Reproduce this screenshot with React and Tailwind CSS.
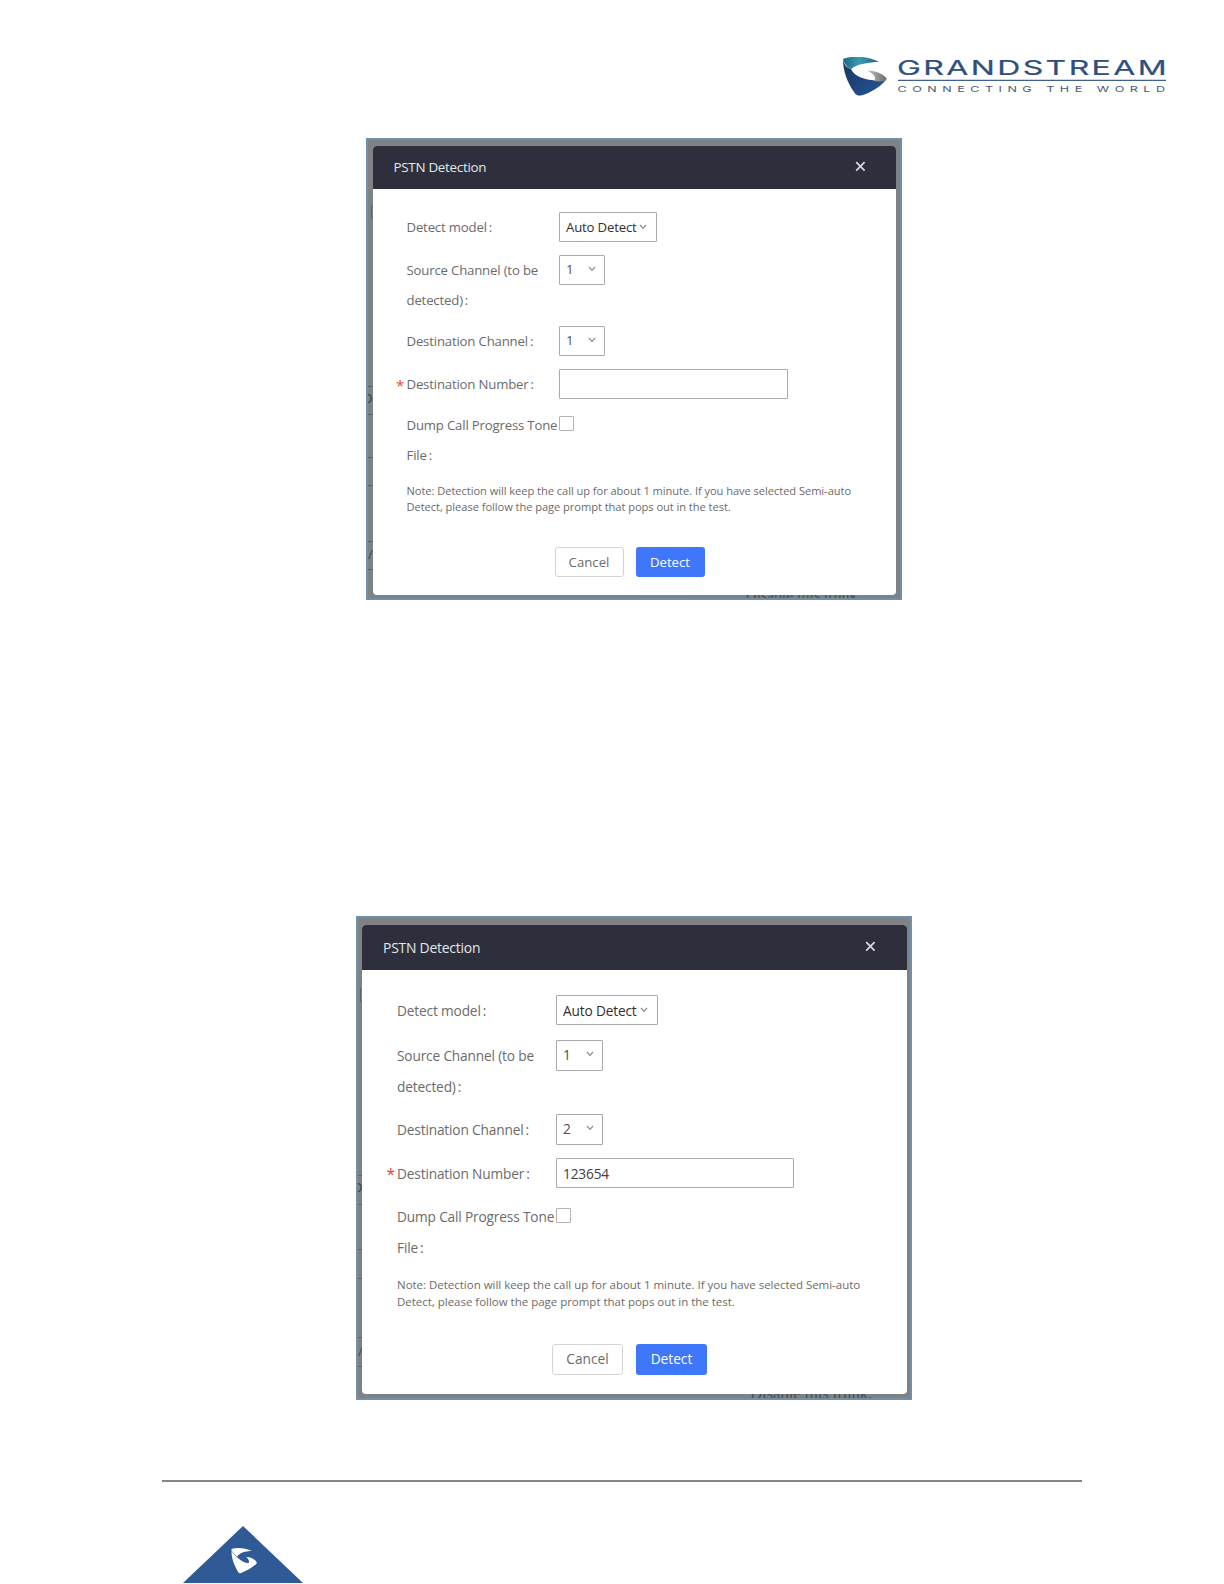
import React from "react";

const first = {
  frame: "ml-[366px] w-[536px] h-[462px] pt-[8px] pl-[7px]",
  modal: "w-[523px] h-[449px]",
  header: "h-[43px] pl-[20.5px] pr-[30px] text-[13.4px] tracking-[-0.28px]",
  title: "",
  close: "size-[11px] mb-[2px]",
  form: "pt-[23px] pl-[33.5px] text-[13.2px] leading-[30px] tracking-[-0.18px]",
  star: "-left-[10.5px] text-[15px]",
  label: "w-[152px]",
  row: "h-[43px]",
  tallRow: "h-[71px]",
  dumpRow: "h-[58px] -mt-[2px]",
  select: "w-[98px] h-[30px] pl-[6.5px] pr-[9px]",
  small: "w-[46px] h-[30px] pl-[6.5px] pr-[8px] pb-[2px]",
  input: "w-[229px] h-[30px] pl-[7px]",
  check: "size-[15px] mt-[6px]",
  note: "mt-[15px] text-[11.1px] leading-[16px] tracking-[-0.045px]",
  actions: "mt-[32px] ml-[148px] gap-[12px] text-[13.2px] tracking-normal",
  button: "w-[69px] h-[30px] pb-px",
  hidden: "left-[377px] top-[448px] text-[15.8px]",
  marks: [
    "top-[65px] h-[14px] w-px left-[3px]",
    "top-[246px] h-px w-[5px] left-0",
    "top-[274px] h-px w-[5px] left-0",
    "top-[317px] h-px w-[5px] left-0",
    "top-[345px] h-px w-[5px] left-0",
    "top-[401px] h-px w-[5px] left-0",
    "top-[429px] h-px w-[5px] left-0",
  ],
  o: "top-[248px]",
  slash: "top-[405px]",
};

const second = {
  frame: "ml-[356px] w-[556px] h-[484px] pt-[9px] pl-[6px]",
  modal: "w-[545px] h-[469px]",
  header: "h-[45px] pl-[21px] pr-[31px] text-[13.9px] tracking-[-0.22px]",
  title: "mt-px",
  close: "size-[11px] mb-[2px]",
  form: "pt-[25px] pl-[35px] text-[13.7px] leading-[31px] tracking-[-0.16px]",
  star: "-left-[10.5px] text-[15.5px]",
  label: "w-[158.5px]",
  row: "h-[44.5px]",
  tallRow: "h-[74px]",
  dumpRow: "h-[61px] -mt-[2px]",
  select: "w-[102px] h-[30px] pl-[6.5px] pr-[9px]",
  small: "w-[47px] h-[31px] pl-[6.5px] pr-[8px] pb-[2px]",
  input: "w-[238.5px] h-[30px] pl-[6.5px]",
  check: "size-[15.5px] mt-[7px]",
  note: "mt-[14px] text-[11.5px] leading-[17px] tracking-[-0.02px]",
  actions: "mt-[34px] ml-[155px] gap-[13px] text-[13.7px] tracking-normal",
  button: "w-[71px] h-[31px] pb-[2px]",
  hidden: "left-[392px] top-[468px] text-[16.6px]",
  marks: [
    "top-[70px] h-[14px] w-px left-[2px]",
    "top-[257px] h-px w-[5px] left-0",
    "top-[286px] h-px w-[5px] left-0",
    "top-[331px] h-px w-[5px] left-0",
    "top-[360px] h-px w-[5px] left-0",
    "top-[419px] h-px w-[5px] left-0",
    "top-[448px] h-px w-[5px] left-0",
  ],
  o: "top-[259px]",
  slash: "top-[424px]",
};

function Chevron() {
  return (
    <svg viewBox="0 0 8 6" className="h-[6px] w-[8px]" fill="none" stroke="#8d8d8d" strokeWidth="1.2">
      <path d="M1 1l3 3.4L7 1" />
    </svg>
  );
}

function Select({ className, children }) {
  return (
    <div className={`flex shrink-0 items-center justify-between rounded-[1px] border border-[#a9a9a9] whitespace-nowrap ${className}`}>
      <span>{children}</span>
      <Chevron />
    </div>
  );
}

function Row({ s, className, label, required, children }) {
  return (
    <div className={`relative flex items-start ${className}`}>
      {required && <span className={`absolute top-[1px] text-[#f04040] ${s.star}`}>*</span>}
      <div className={`shrink-0 whitespace-nowrap text-[#6b6b6b] ${s.label}`}>{label}</div>
      {children}
    </div>
  );
}

function Colon() {
  return <span className="ml-[2px]">:</span>;
}

function PstnDialog({ s, channel, number }) {
  return (
    <section className={`relative overflow-hidden border-2 border-[#7290a8] bg-[#7f8285] ${s.frame}`}>
      {s.marks.map((m) => (
        <i key={m} className={`absolute bg-[#596570] ${m}`} />
      ))}
      <span className={`absolute -left-[5px] text-[16px] leading-[18px] text-[#3c464f] ${s.o}`}>o</span>
      <span className={`absolute left-0 text-[13px] leading-[18px] text-[#3c464f] ${s.slash}`}>/</span>
      <span className={`absolute whitespace-nowrap font-['Liberation_Serif',serif] leading-[16px] text-[#4a4e51] ${s.hidden}`}>
        Disable this trunk.
      </span>
      <div className={`relative -mt-[2px] -ml-[2px] overflow-hidden rounded-[4px] bg-white ${s.modal}`}>
        <header className={`flex items-center justify-between bg-[#2d303c] text-[#e4e6ea] ${s.header}`}>
          <span className={`whitespace-nowrap ${s.title}`}>PSTN Detection</span>
          <svg viewBox="0 0 11 11" className={s.close} stroke="#d9dbe2" strokeWidth="1.7" fill="none">
            <path d="M1.2 1.2l8.4 8.4M9.6 1.2L1.2 9.6" />
          </svg>
        </header>
        <div className={s.form}>
          <Row s={s} className={s.row} label={<>Detect model<Colon /></>}>
            <Select className={`text-[#303030] ${s.select}`}>Auto Detect</Select>
          </Row>
          <Row s={s} className={s.tallRow} label={<>Source Channel (to be<br />detected)<Colon /></>}>
            <Select className={`text-[#505050] ${s.small}`}>1</Select>
          </Row>
          <Row s={s} className={s.row} label={<>Destination Channel<Colon /></>}>
            <Select className={`text-[#505050] ${s.small}`}>{channel}</Select>
          </Row>
          <Row s={s} className={s.row} required label={<>Destination Number<Colon /></>}>
            <div className={`flex items-center rounded-[1px] border border-[#a9a9a9] text-[#404040] ${s.input}`}>
              <span>{number}</span>
            </div>
          </Row>
          <Row s={s} className={s.dumpRow} label={<>Dump Call Progress Tone<br />File<Colon /></>}>
            <div className={`rounded-[1px] border border-[#b4b4b4] ${s.check}`} />
          </Row>
          <p className={`whitespace-nowrap text-[#6b6b6b] ${s.note}`}>
            Note: Detection will keep the call up for about 1 minute. If you have selected Semi-auto
            <br />
            Detect, please follow the page prompt that pops out in the test.
          </p>
          <div className={`flex ${s.actions}`}>
            <button className={`flex items-center justify-center rounded-[3px] border border-[#d4d4d4] text-[#6b6b6b] ${s.button}`}>
              Cancel
            </button>
            <button className={`flex items-center justify-center rounded-[3px] bg-[#3f77fb] text-white ${s.button}`}>
              Detect
            </button>
          </div>
        </div>
      </div>
    </section>
  );
}

function BrandLogo() {
  return (
    <svg viewBox="0 0 330 44" className="h-[44px] w-[330px]">
      <defs>
        <linearGradient id="teal" x1="0" x2="1">
          <stop offset="0" stopColor="#1d6488" />
          <stop offset="0.45" stopColor="#3b9bb0" />
          <stop offset="1" stopColor="#245c86" />
        </linearGradient>
        <linearGradient id="navy" x1="0" y1="0" x2="1" y2="1">
          <stop offset="0" stopColor="#1a3560" />
          <stop offset="1" stopColor="#24569a" />
        </linearGradient>
        <linearGradient id="silver" x1="0" x2="1">
          <stop offset="0" stopColor="#c4c4c4" />
          <stop offset="1" stopColor="#676767" />
        </linearGradient>
      </defs>
      <path d="M0 2C10 -2 25 -1 36 5C26 5 14 7 8 12C5 11 1 7 0 2Z" fill="url(#teal)" />
      <path d="M0 2C1 8 4 11 8 12C12 21 27 25 43 23C36 31 27 36 18 38.500C15 39 13 38 11 35C4 25 0 14 0 2Z" fill="url(#navy)" />
      <path d="M24 13.500C33 14 41 17 44 22L41 24C37 25 34 24 31 24C34 21 31 17 24 13.500Z" fill="url(#silver)" />
      <g fontFamily="Inter, sans-serif" fill="#2f4f7f" stroke="#2f4f7f">
        <text x="54" y="18" fontSize="20" textLength="272" lengthAdjust="spacingAndGlyphs" letterSpacing="1.5" strokeWidth=".2">
          GRANDSTREAM
        </text>
        <text x="54.500" y="35" fontSize="8" textLength="273" lengthAdjust="spacingAndGlyphs" letterSpacing="3.500" fill="#4a5a78" stroke="none">
          CONNECTING THE WORLD
        </text>
      </g>
      <path d="M55 23.300H323" stroke="#3f5f92" strokeWidth="1.2" />
    </svg>
  );
}

export default function App() {
  return (
    <main className="flex h-[1584px] w-[1224px] flex-col overflow-hidden bg-white font-['Open_Sans',sans-serif]">
      <header className="flex h-[138px] shrink-0 items-start pt-[57px] pl-[843px]">
        <BrandLogo />
      </header>
      <PstnDialog s={first} channel="1" number="" />
      <div className="h-[316px] shrink-0" />
      <PstnDialog s={second} channel="2" number="123654" />
      <footer className="flex flex-col pt-[80px] pl-[162px]">
        <div className="h-[2px] w-[920px] bg-[#858585]" />
        <svg viewBox="0 0 120 57" className="mt-[44px] ml-[20.5px] h-[57px] w-[120px]">
          <path d="M60 0L120 57H0Z" fill="#2f5a95" />
          <path d="M48.500 23C54 21 62 22 69 25C62 25 56 27 54 31C59 36 64 38 73 38C69 42 63 45 58 47C56 48 55 46 54 44C50 37 48 30 48.500 23Z" fill="#fff" />
          <path d="M63 31C68 31 72 33 74 37L72 39C68 39 67 38 65 38C67 36 66 33 63 31Z" fill="#fff" />
          <path d="M48.500 25C50 27 52 29 54 31" stroke="#2f5a95" strokeWidth=".6" fill="none" />
        </svg>
      </footer>
    </main>
  );
}
